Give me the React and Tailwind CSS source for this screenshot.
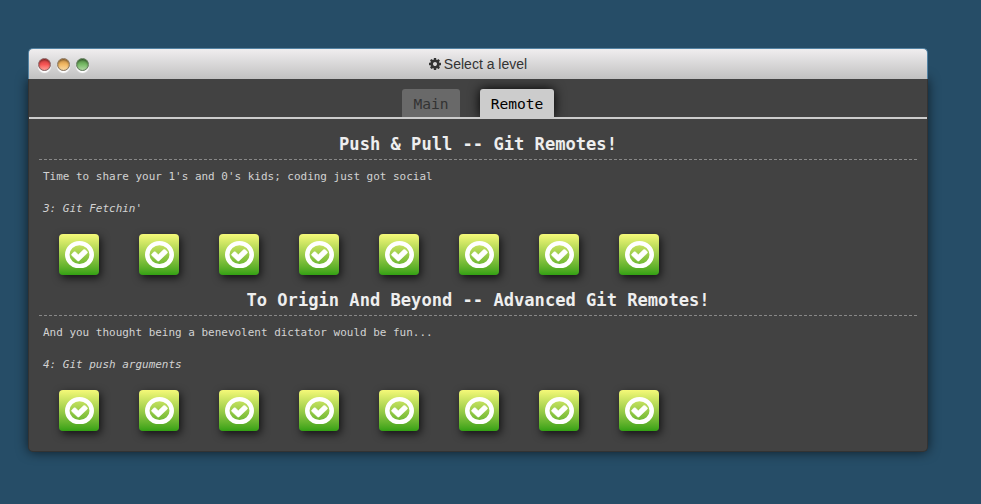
import React from "react";

const MONO = "font-['DejaVu_Sans_Mono',monospace]";

function CheckIcon() {
  return (
    <svg viewBox="128 128 1536 1536" preserveAspectRatio="none" className="h-[27.4px] w-[29px]">
      <circle cx="896" cy="896" r="648" fill="none" stroke="#fff" strokeWidth="240" />
      <path
        fill="#fff"
        stroke="#fff"
        strokeWidth="30"
        d="M1299 813l-422 422q-19 19-45 19t-45-19l-294-294q-19-19-19-45t19-45l102-102q19-19 45-19t45 19l147 147 275-275q19-19 45-19t45 19l102 102q19 19 19 45t-19 45z"
      />
    </svg>
  );
}

function CogIcon() {
  return (
    <svg viewBox="0 128 1536 1536" className="mr-[3px] mb-px h-3 w-3" fill="#333">
      <path d="M1024 896q0-106-75-181t-181-75-181 75-75 181 75 181 181 75 181-75 75-181zm512-109v222q0 12-8 23t-20 13l-185 28q-19 54-39 91 35 50 107 138 10 12 10 25t-9 23q-27 37-99 108t-94 71q-12 0-26-9l-138-108q-44 23-91 38-16 136-29 186-7 28-36 28h-222q-14 0-24.5-8.5t-11.5-21.500l-28-184q-49-16-90-37l-141 107q-10 9-25 9-14 0-25-11-126-114-165-168-7-10-7-23 0-12 8-23 15-21 51-66.500t54-70.500q-27-50-41-99l-183-27q-13-2-21-12.500t-8-23.500v-222q0-12 8-23t19-13l186-28q14-46 39-92-40-57-107-138-10-12-10-24 0-10 9-23 26-36 98.500-107.500t94.500-71.500q13 0 26 10l138 107q44-23 91-38 16-136 29-186 7-28 36-28h222q14 0 24.500 8.500t11.500 21.500l28 184q49 16 90 37l142-107q9-9 24-9 13 0 25 10 129 119 165 170 7 8 7 22 0 12-8 23-15 21-51 66.500t-54 70.500q26 50 41 98l183 28q13 2 21 12.500t8 23.500z" />
    </svg>
  );
}

const LIGHTS = [
  "border-[#8a6363] bg-linear-to-b from-[#c63c3c] via-[#f75555] to-[#ff9c96]",
  "border-[#8d7860] bg-linear-to-b from-[#c98f45] via-[#f2b964] to-[#fbdba2]",
  "border-[#647d5e] bg-linear-to-b from-[#508a43] via-[#78bb67] to-[#b0d8a2]",
];

const SECTIONS = [
  {
    title: "Push & Pull -- Git Remotes!",
    about: "Time to share your 1's and 0's kids; coding just got social",
    name: "3: Git Fetchin'",
  },
  {
    title: "To Origin And Beyond -- Advanced Git Remotes!",
    about: "And you thought being a benevolent dictator would be fun...",
    name: "4: Git push arguments",
  },
];

function Series({ title, about, name }) {
  return (
    <section className="h-[156px] px-[10px]">
      <h3 className="h-[29px] border-b border-dashed border-[#888] text-center text-[17.1px] leading-[26px] font-bold whitespace-pre text-[#eee]">
        {title}
      </h3>
      <p className="mt-[9px] ml-1 text-[10.97px] leading-4 text-[#d2d2d2]">{about}</p>
      <p className="mt-4 ml-1 text-[10.97px] leading-4 text-[#d2d2d2] italic">{name}</p>
      <div className="mt-[17px] ml-5 flex gap-10">
        {Array.from({ length: 8 }, (_, i) => (
          <button
            key={i}
            className="flex h-[41px] w-10 items-center justify-center rounded-[4px] bg-linear-to-b from-[#f5f978] to-[#32a113] pl-px shadow-[2px_3px_9px_rgba(0,0,0,0.7)]"
          >
            <CheckIcon />
          </button>
        ))}
      </div>
    </section>
  );
}

export default function App() {
  return (
    <main className="h-[504px] w-[981px] overflow-hidden bg-[#264d67] pt-12 pl-7">
      <div className="w-[900px] rounded-[5px]">
        <header className="relative z-10 flex h-[31px] items-center rounded-t-[5px] border border-b-0 border-[#5483a3] bg-linear-to-b from-[#f0eeef] to-[#c1c1c1] pl-[9px]">
          <div className="flex w-[53px] gap-[6px]">
            {LIGHTS.map((light) => (
              <span
                key={light}
                className={`h-[13px] w-[13px] rounded-full border ${light} shadow-[0_2px_1px_#fff,inset_0_1px_2px_rgba(0,0,0,0.45)]`}
              />
            ))}
          </div>
          <div className="flex flex-1 items-center justify-center pr-[62px] font-['Liberation_Sans',sans-serif] text-sm text-[#333]">
            <CogIcon />
            <span>Select a level</span>
          </div>
        </header>
        <div className={`h-[373px] rounded-b-[5px] border border-t-0 border-[#333] bg-[#424242] shadow-[0_0_12px_rgba(0,0,0,0.65)] ${MONO}`}>
          <nav className="flex h-10 items-end gap-5 border-b-2 border-[#ccc] pl-[373px] text-[14.6px]">
            <div className="flex h-7 w-[58px] items-center justify-center rounded-t-[3px] bg-[#696969] pt-0.5 text-[#333]">Main</div>
            <div className="flex h-7 w-[74px] items-center justify-center rounded-t-[3px] bg-[#ccc] pt-0.5 text-black shadow-[0_0_12px_#000] [clip-path:inset(-20px_-20px_0_-20px)]">Remote</div>
          </nav>
          <div className="pt-3">
            {SECTIONS.map((s) => (
              <Series key={s.name} {...s} />
            ))}
          </div>
        </div>
      </div>
    </main>
  );
}
